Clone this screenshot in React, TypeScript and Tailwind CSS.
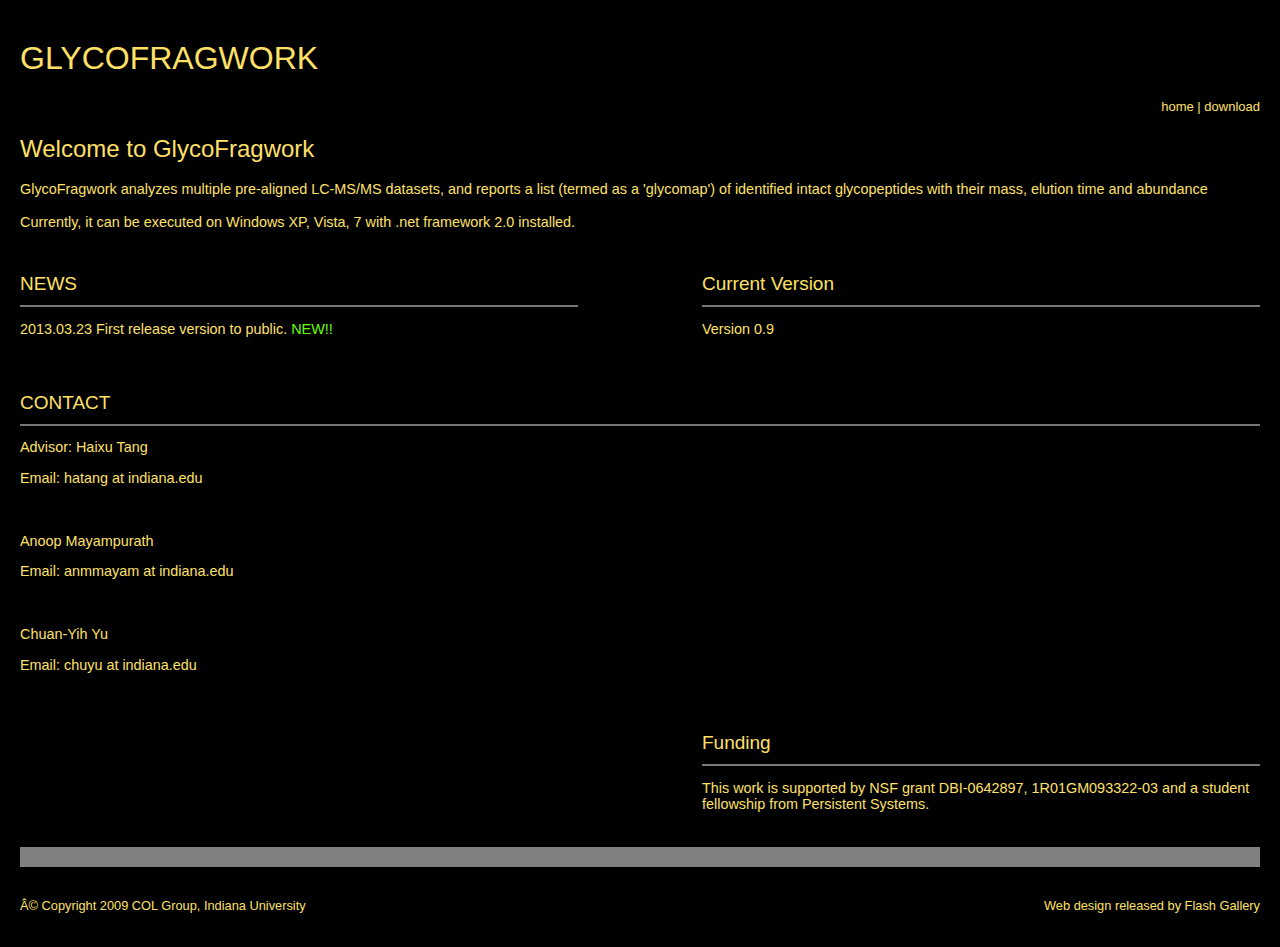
import React from 'react';

const Rule = () => <div className="mt-[10px] h-[2px] bg-[#777777]" />;

export default function App() {
  return (
    <div className="min-h-[947px] bg-black px-5 pb-[33px] text-[14.4px] leading-[16px] text-[#ffe066] [font-family:'Liberation_Sans',Arial,sans-serif]">
      {/* Header */}
      <h1 className="pt-[40px] text-[32px] leading-[37px]">GLYCOFRAGWORK</h1>
      <div className="mt-[22px] text-right text-[13px] leading-[15px]">
        <a href="#">home</a> | <a href="#">download</a>
      </div>

      {/* Intro */}
      <h2 className="mt-[21px] text-[24px] leading-[28px]">Welcome to GlycoFragwork</h2>
      <p className="mt-[18px]">
        GlycoFragwork analyzes multiple pre-aligned LC-MS/MS datasets, and reports a list (termed as a 'glycomap') of identified intact glycopeptides with their mass, elution time and abundance
      </p>
      <p className="mt-[17px]">Currently, it can be executed on Windows XP, Vista, 7 with .net framework 2.0 installed.</p>

      {/* News + version */}
      <div className="mt-[43px] flex justify-between">
        <div className="w-[45%]">
          <h3 className="text-[19px] leading-[22px]">NEWS</h3>
          <Rule />
          <p className="mt-[14px]">
            2013.03.23 First release version to public. <span className="text-[#66ff00]">NEW!!</span>
          </p>
        </div>
        <div className="w-[45%]">
          <h3 className="text-[19px] leading-[22px]">Current Version</h3>
          <Rule />
          <p className="mt-[14px]">Version 0.9</p>
        </div>
      </div>

      {/* Contact */}
      <h3 className="mt-[55px] text-[19px] leading-[22px]">CONTACT</h3>
      <Rule />
      <p className="mt-[13px]">Advisor: Haixu Tang</p>
      <p className="mt-[15px]">Email: hatang at indiana.edu</p>
      <p className="mt-[47px]">Anoop Mayampurath</p>
      <p className="mt-[14px]">Email: anmmayam at indiana.edu</p>
      <p className="mt-[47px]">Chuan-Yih Yu</p>
      <p className="mt-[15px]">Email: chuyu at indiana.edu</p>

      {/* Funding */}
      <div className="mt-[59px] flex justify-end">
        <div className="w-[45%]">
          <h3 className="text-[19px] leading-[22px]">Funding</h3>
          <Rule />
          <p className="mt-[14px]">
            This work is supported by NSF grant DBI-0642897, 1R01GM093322-03 and a student fellowship from Persistent Systems.
          </p>
        </div>
      </div>

      {/* Footer */}
      <div className="mt-[35px] h-[20px] bg-[#808080]" />
      <div className="mt-[31px] flex justify-between text-[12.8px] leading-[15px]">
        <span>Â© Copyright 2009 COL Group, Indiana University</span>
        <span>Web design released by Flash Gallery</span>
      </div>
    </div>
  );
}
